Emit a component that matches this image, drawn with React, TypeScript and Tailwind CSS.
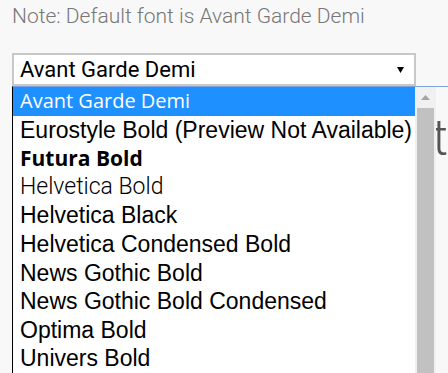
const fonts = [
  { name: "Avant Garde Demi", cls: "font-['Open_Sans',sans-serif] text-[20px]" },
  { name: "Eurostyle Bold (Preview Not Available)", cls: "" },
  { name: "Futura Bold", cls: "font-['Open_Sans',sans-serif] font-bold text-[21px]" },
  { name: "Helvetica Bold", cls: "font-['Roboto',sans-serif] font-light text-[23px]" },
  { name: "Helvetica Black", cls: "" },
  { name: "Helvetica Condensed Bold", cls: "" },
  { name: "News Gothic Bold", cls: "" },
  { name: "News Gothic Bold Condensed", cls: "" },
  { name: "Optima Bold", cls: "" },
  { name: "Univers Bold", cls: "" },
];

const App = () => {
  const selected = "Avant Garde Demi";

  return (
    <div className="min-h-screen bg-[#f8f8f8] font-['Roboto',sans-serif] overflow-hidden">
      <div className="pl-[12px] pt-[1px]">
        <p className="text-[21px] font-light leading-[30px] text-[#777]">
          Note: Default font is Avant Garde Demi
        </p>

        <div className="relative mt-[22px]">
          <div className="w-[404px] h-[33px] border-2 border-[#c8c8c8] bg-white flex items-center justify-between pl-[6px] pr-[10px]">
            <span className="text-[22px] text-black leading-none">{selected}</span>
            <svg width="7" height="6" viewBox="0 0 7 6">
              <path d="M0 0 L7 0 L3.5 6 Z" fill="#000" />
            </svg>
          </div>

          {/* preview behind the open list */}
          <div className="border-t border-[#7fa3e0] pt-[26px] text-right whitespace-nowrap overflow-hidden">
            <span className="text-[50px] font-light leading-none text-[#555]">
              Sample text
            </span>
          </div>

          {/* opened dropdown */}
          <div className="absolute left-0 top-[33px] w-[424px] flex border-l border-black border-t border-t-[#7fa3e0]">
            <ul className="w-[402px] bg-white font-['Liberation_Sans',Arial,sans-serif] text-[23px] text-black">
              {fonts.map((f) => (
                <li
                  key={f.name}
                  className={`h-[28.6px] flex items-center pl-[7px] whitespace-nowrap ${
                    f.name === selected ? "bg-[#1e90ff] text-white" : ""
                  } ${f.cls}`}
                >
                  {f.name}
                </li>
              ))}
            </ul>
            <div className="w-[21px] bg-[#f0f0f0] flex flex-col items-center">
              <div className="h-[21px] flex items-center justify-center">
                <svg width="9" height="5" viewBox="0 0 9 5">
                  <path d="M0 5 L4.5 0 L9 5 Z" fill="#a3a3a3" />
                </svg>
              </div>
              <div className="w-[17px] flex-1 bg-[#c1c1c1]" />
            </div>
          </div>
        </div>
      </div>
    </div>
  );
};

export default App;
